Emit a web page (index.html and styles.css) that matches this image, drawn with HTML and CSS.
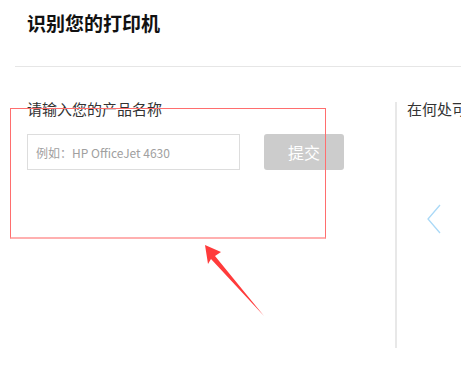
FILE: index.html
```html
<!DOCTYPE html>
<html lang="zh-CN">
<head>
<meta charset="utf-8">
<title>识别您的打印机</title>
<link rel="stylesheet" href="styles.css">
</head>
<body>
<header class="hd"><h1 class="title">识别您的打印机</h1></header>
<main class="content">
  <section class="left">
    <div class="label">请输入您的产品名称</div>
    <div class="form">
      <input class="field" type="text" placeholder="例如：HP OfficeJet 4630">
      <button class="submit" type="button">提交</button>
    </div>
  </section>
  <section class="right">
    <div class="label nowrap">在何处可找到产品名称？</div>
    <svg class="chev" width="14" height="30" viewBox="0 0 14 30"><polyline points="13,1 1,15 13,29" fill="none" stroke="#aad9f7" stroke-width="1.3"/></svg>
  </section>
</main>
<div class="mark"></div>
<svg class="arrow" width="461" height="370" viewBox="0 0 461 370"><polygon points="205,245 221,252 215,256 264,316 211,259 208,264" fill="#ff3b3b"/></svg>
</body>
</html>
```
FILE: styles.css
```css
html, body { margin: 0; padding: 0; background: #fff; }
body {
  width: 461px; height: 370px; overflow: hidden; position: relative;
  font-family: "Noto Sans CJK SC", "Noto Sans", sans-serif; color: #222;
}
.hd { margin-left: 15px; height: 67px; border-bottom: 1px solid #e6e6e6; box-sizing: border-box; }
.title { margin: 0; padding: 10px 0 0 12px; font-size: 19px; line-height: 26px; font-weight: bold; color: #111; }
.content { display: flex; margin: 35px 0 0 15px; height: 246px; }
.left { width: 368px; padding-left: 12px; flex: none; }
.label { font-size: 15px; line-height: 18px; color: #333; margin-top: -2px; }
.form { display: flex; gap: 24px; margin-top: 16px; }
.field {
  width: 213px; height: 36px; box-sizing: border-box; border: 1px solid #ddd; padding: 0 0 0 8px;
  font-family: inherit; font-size: 12px; color: #999; outline: none; margin: 0;
}
.field::placeholder { color: #a0a0a0; }
.submit {
  width: 80px; height: 36px; border: 0; border-radius: 3px; background: #ccc; color: #fff;
  font-family: inherit; font-size: 16px; margin: 0; padding: 0;
}
.right { border-left: 2px solid #e8e8e8; padding-left: 10px; display: flex; flex-direction: column; min-width: 0; flex: 1; overflow: hidden; }
.nowrap { white-space: nowrap; }
.chev { margin: 86px 0 0 20px; display: block; }
.mark { position: absolute; left: 10px; top: 108px; width: 316px; height: 131px; box-sizing: border-box; border: 1px solid #ff6e6e; border-bottom: 2px solid #ffb0b0; }
.arrow { position: absolute; left: 0; top: 0; pointer-events: none; }
```
